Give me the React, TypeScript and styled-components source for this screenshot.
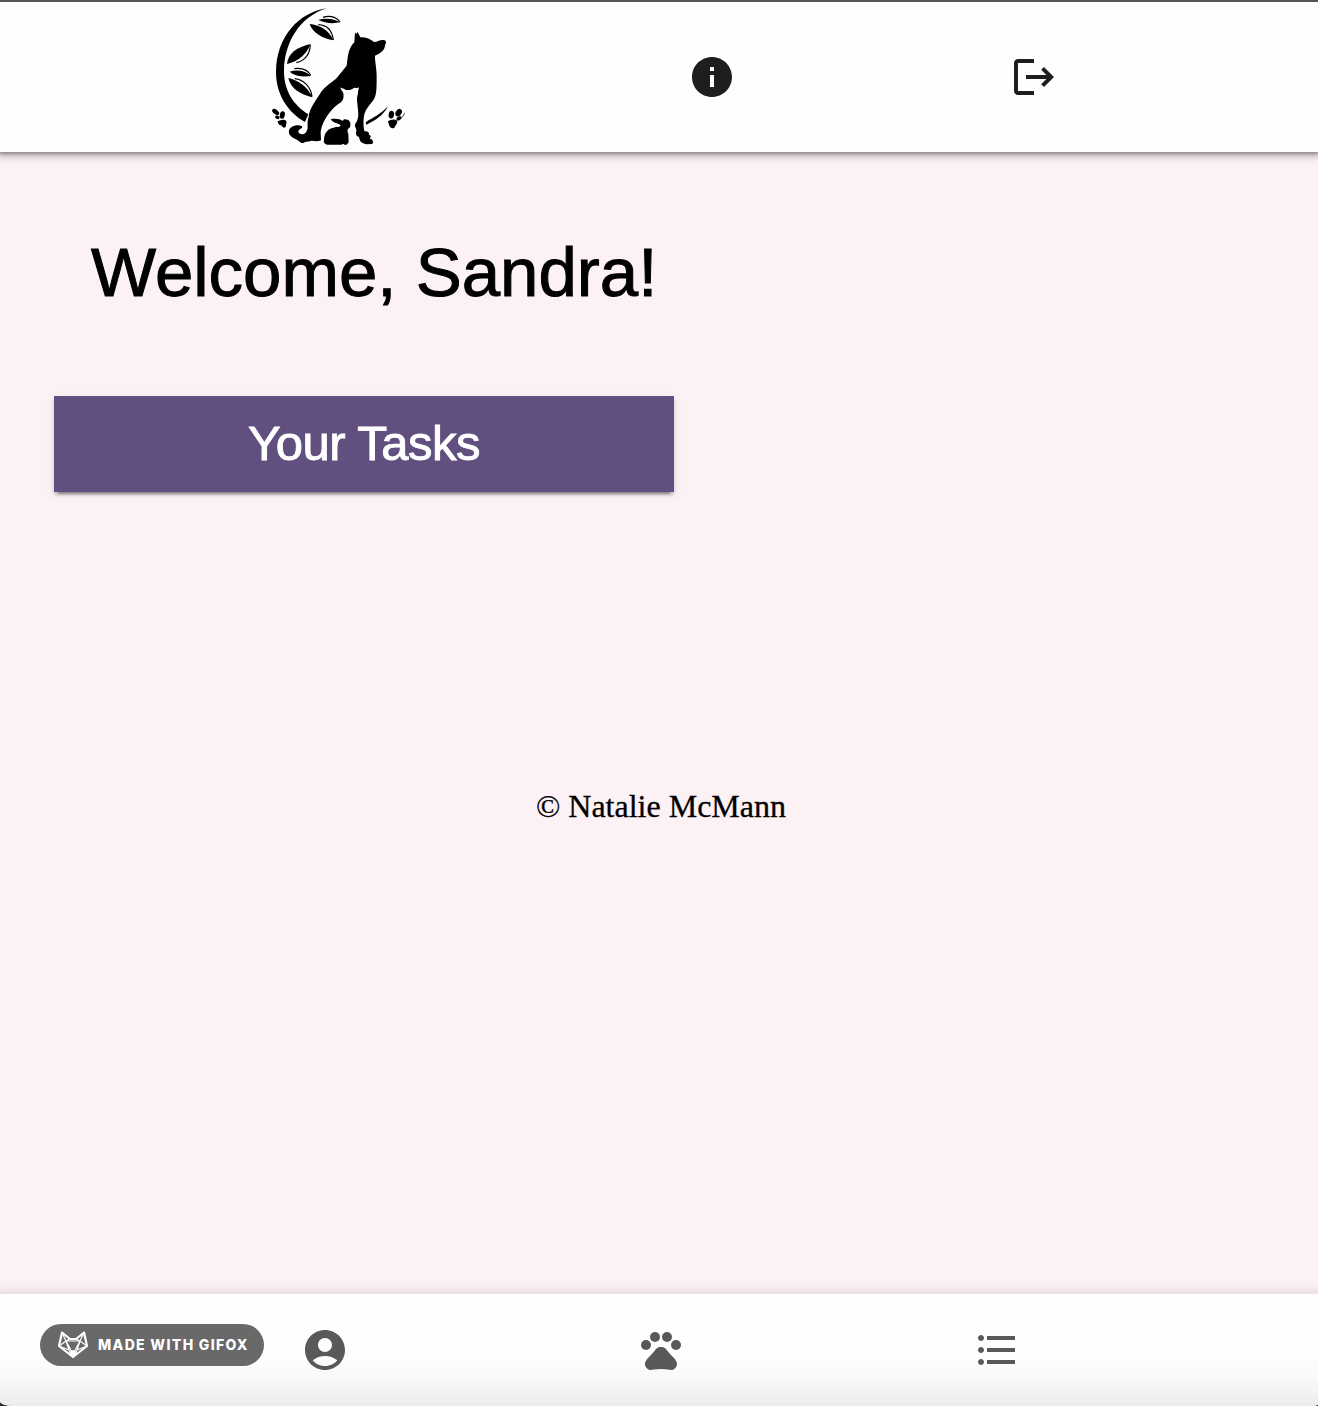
import React from "react";
import styled, { createGlobalStyle } from "styled-components";
import {
  MdAccountCircle,
  MdFormatListBulleted,
  MdInfo,
  MdLogout,
  MdPets,
} from "react-icons/md";

const GlobalStyle = createGlobalStyle`
  *, *::before, *::after { box-sizing: border-box; }
  html, body { margin: 0; padding: 0; background: #2b2b2b; }
  button { font: inherit; border: 0; background: none; padding: 0; cursor: pointer; }
`;

const Screen = styled.div`
  display: flex;
  flex-direction: column;
  height: 1406px;
  background: #fcf1f5;
  border-top: 2px solid #555355;
  border-radius: 0 0 6px 12px / 0 0 2px 5px;
  overflow: hidden;
`;

const Header = styled.header`
  flex: none;
  display: flex;
  align-items: center;
  height: 150px;
  padding-left: 264px;
  background: #fefefe;
  box-shadow: 0 0 8px 3px rgba(0, 0, 0, 0.36), 0 0 3px 2px rgba(0, 0, 0, 0.2);
  z-index: 1;
`;

const IconButton = styled.button<{ $color: string; $gap?: number }>`
  display: flex;
  flex: none;
  width: 48px;
  height: 48px;
  margin-left: ${(p) => p.$gap ?? 0}px;
  color: ${(p) => p.$color};
  svg {
    width: 48px;
    height: 48px;
  }
`;

const LogoArt = styled.svg`
  flex: none;
  align-self: flex-start;
  width: 150px;
  height: 148px;
  fill: #000;
`;

const Main = styled.main`
  flex: 1;
  display: flex;
  flex-direction: column;
`;

const Column = styled.section`
  display: flex;
  flex-direction: column;
  width: 620px;
  margin-left: 54px;
`;

const Welcome = styled.h1`
  margin: 78px 0 0;
  padding-left: 37px;
  font: 400 69px/85px "Liberation Sans", Arial, sans-serif;
  letter-spacing: 0;
  white-space: nowrap;
  color: #000;
  -webkit-text-stroke: 1px #000;
`;

const TasksButton = styled.button`
  && {
    display: flex;
    justify-content: center;
    height: 96px;
    margin-top: 81px;
    background: #61507f;
    color: #fff;
    font: 400 49px/94px "Liberation Sans", Arial, sans-serif;
    letter-spacing: -0.5px;
    box-shadow: 0 6px 2px -4px rgba(0, 0, 0, 0.3), 0 3px 3px rgba(0, 0, 0, 0.16),
      0 2px 8px rgba(0, 0, 0, 0.08);
    -webkit-text-stroke: 0.9px #fff;
  }
`;

const Copyright = styled.p`
  margin: 295px 0 0;
  padding-left: 4px;
  text-align: center;
  font: 400 32px/38px "Liberation Serif", "Times New Roman", serif;
  color: #000;
  -webkit-text-stroke: 0.3px #000;
`;

const BottomBar = styled.nav`
  flex: none;
  display: flex;
  height: 112px;
  padding-left: 40px;
  background: linear-gradient(#fefefe 0 52%, #f9f9f9 75%, #ececec);
  box-shadow: 0 0 10px 4px rgba(0, 0, 0, 0.09);
`;

const Tabs = styled.div`
  display: flex;
  gap: 288px;
  margin: 32px 0 0 37px;
`;

const Badge = styled.div`
  display: flex;
  flex: none;
  align-items: center;
  width: 224px;
  height: 42px;
  margin-top: 30px;
  padding-left: 17px;
  border-radius: 21px;
  background: #696969;
`;

const Fox = styled.svg`
  flex: none;
  width: 32px;
  height: 30px;
  fill: none;
  stroke: #fff;
  stroke-linejoin: round;
`;

const BadgeText = styled.span`
  margin-left: 9px;
  font: 800 14px/42px Inter, "Open Sans", sans-serif;
  letter-spacing: 1.33px;
  white-space: nowrap;
  color: #fff;
`;

function Logo() {
  return (
    <LogoArt viewBox="0 6 450 444" aria-label="Dog, cat and rabbit">
      {/* crescent */}
      <path d="M188 25C145 32 110 52 82 84C52 119 36 165 36 216C36 282 70 336 123 366L133 343C87 315 59 270 60 211C61 130 105 51 188 25Z" />
      {/* leaves */}
      <path d="M163 60C180 55 203 53 229 67C205 72 181 69 163 60Z" />
      <path d="M137 72C166 74 194 90 209 121C175 115 146 99 137 72Z" />
      <path d="M69 192C72 160 99 141 140 132C127 164 103 184 69 192Z" />
      <path d="M77 215C99 208 124 212 141 228C118 232 92 228 77 215Z" />
      <path d="M73 234C103 241 130 259 145 292C108 282 80 266 73 234Z" />
      <g fill="none" stroke="#000" strokeWidth="3.5">
        <path d="M177 52C193 46 214 48 228 66" />
        <path d="M163 74C185 75 204 88 208 120" />
        <path d="M97 188C121 182 137 165 139 135" />
        <path d="M91 206C112 203 130 208 140 226" />
        <path d="M92 236C118 239 140 258 144 290" />
      </g>
      {/* dog, with the cat's outline cut from its chest */}
      <path d="M273 97L277 102L281 96L289 112C305 111 318 117 330 126C338 127 346 119 359 120L365 122L366 130C362 134 364 139 361 145C357 155 345 162 333 167C332 184 339 207 338 236C338 277 336 291 326 303C315 317 307 325 301 343C297 360 298 377 301 394C311 393 319 399 314 405C321 405 322 411 317 416C327 416 329 426 325 432L307 433C292 429 288 426 285 411C277 409 274 403 277 393C278 384 269 380 275 370C283 359 284 346 282 330L279 301C278 290 283 282 282 275L285 262C280 267 274 262 269 264C264 271 250 270 245 270C241 265 234 267 229 262C230 270 236 273 238 280C240 291 238 303 229 308C215 315 199 333 188 350C177 366 172 380 170 396L171 421C161 426 150 423 141 422C134 427 123 422 119 429C109 431 105 420 92 416C79 410 73 402 75 391C80 377 101 373 113 378C120 385 105 385 103 394C102 403 119 408 127 395C135 383 127 370 134 350C137 323 155 303 173 274C190 253 210 243 218 234L248 197C252 165 253 145 271 127Z" />
      {/* rabbit */}
      <path d="M200 358C213 355 229 357 236 363C241 353 248 361 252 359C260 365 262 376 256 384C249 387 250 394 253 401L254 427L248 434H241L238 431L232 434H188C185 431 177 430 180 420C180 399 191 386 209 383C219 380 228 383 230 376C222 369 210 371 200 358Z" />
      {/* branch and paw prints */}
      <path d="M305 367C329 351 349 344 372 319C359 346 333 362 307 374Z" />
      <ellipse cx="35" cy="336" rx="12" ry="7" transform="rotate(38 35 336)" />
      <ellipse cx="55" cy="345" rx="7.5" ry="11.5" transform="rotate(12 55 345)" />
      <ellipse cx="40" cy="352" rx="7" ry="5" transform="rotate(25 40 352)" />
      <path d="M41 364C49 360 61 356 67 363C69 370 65 376 65 381C58 386 54 380 52 376C46 377 41 371 41 364Z" />
      <ellipse cx="382" cy="344" rx="8" ry="11.5" transform="rotate(12 382 344)" />
      <ellipse cx="404" cy="338" rx="8.5" ry="12" transform="rotate(35 404 338)" />
      <ellipse cx="405" cy="355" rx="8.5" ry="5.5" transform="rotate(-28 405 355)" />
      <path d="M372 364C380 358 392 356 400 362C401 370 394 376 391 383C384 388 377 382 375 375Z" />
      <path d="M423 336L414 352L412 356L421 344Z" />
    </LogoArt>
  );
}

function GifoxMark() {
  return (
    <Fox viewBox="0 0 32 30">
      <path strokeWidth="2.2" d="M5 2.5L13 9H19L27 2.5L30 16L16 27L2 16Z" />
      <path strokeWidth="1.2" d="M5 2.5L9 11L2 16L12 20L9 11H23L20 20L30 16L23 11L27 2.5M9 11L13 9M23 11L19 9M9 11L16 24L23 11M12 20L16 27L20 20" />
      <path fill="#fff" stroke="none" d="M12 22L16 20L20 22L16 28Z" />
    </Fox>
  );
}

export default function App() {
  return (
    <>
      <GlobalStyle />
      <Screen>
        <Header>
          <Logo />
          <IconButton $color="#1e1e1e" $gap={274} aria-label="About">
            <MdInfo />
          </IconButton>
          <IconButton $color="#1e1e1e" $gap={274} aria-label="Log out">
            <MdLogout />
          </IconButton>
        </Header>
        <Main>
          <Column>
            <Welcome>Welcome, Sandra!</Welcome>
            <TasksButton>Your Tasks</TasksButton>
          </Column>
          <Copyright>© Natalie McMann</Copyright>
        </Main>
        <BottomBar>
          <Badge>
            <GifoxMark />
            <BadgeText>MADE WITH GIFOX</BadgeText>
          </Badge>
          <Tabs>
            <IconButton $color="#595959" aria-label="Profile">
              <MdAccountCircle />
            </IconButton>
            <IconButton $color="#595959" aria-label="Pets">
              <MdPets />
            </IconButton>
            <IconButton $color="#595959" aria-label="Tasks">
              <MdFormatListBulleted />
            </IconButton>
          </Tabs>
        </BottomBar>
      </Screen>
    </>
  );
}
